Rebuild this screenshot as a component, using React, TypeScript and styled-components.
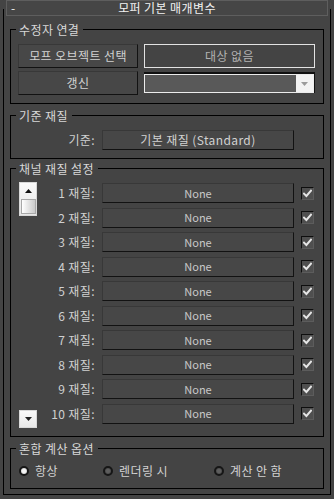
import React from "react";
import styled, { createGlobalStyle } from "styled-components";

const Global = createGlobalStyle`
  html, body { margin: 0; padding: 0; background: #444444; }
  body {
    font-family: "Noto Sans CJK KR", "Noto Sans", sans-serif;
    font-size: 12px;
    letter-spacing: 0.4px;
    color: #d2d2d2;
  }
  * { box-sizing: border-box; }
`;

const Root = styled.div`
  width: 334px;
  height: 499px;
  background: #444444;
  padding: 9px 0 0 3px;
  overflow: hidden;
`;

const Frame = styled.div`
  width: 328px;
  height: 486px;
  border: 1px solid #000;
  border-top: none;
  display: flex;
  flex-direction: column;
`;

const TitleBar = styled.div`
  margin: -9px 2px 0 2px;
  height: 16px;
  flex-shrink: 0;
  border: 1px solid #5e5e5e;
  background: #464646;
  display: grid;
  grid-template-columns: 1fr auto 1fr;
  align-items: center;
  color: #f2f2f2;
  line-height: 14px;
`;

const Collapse = styled.span`
  padding-left: 4px;
`;

const Group = styled.div<{ $top: number; $h: number }>`
  position: relative;
  flex-shrink: 0;
  margin: ${(p) => p.$top}px 6px 0 6px;
  height: ${(p) => p.$h}px;
  border: 1px solid #000;
`;

const GroupLabel = styled.span`
  position: absolute;
  top: -9px;
  left: 5px;
  padding: 0 4px 0 3px;
  background: #444444;
  line-height: 17px;
  color: #d8d8d8;
  white-space: nowrap;
`;

const ConnectGrid = styled.div`
  display: grid;
  grid-template-columns: 120px 171px;
  grid-template-rows: 24px 24px;
  column-gap: 6px;
  row-gap: 3px;
  padding: 14px 0 0 7px;
`;

const Button = styled.div<{ $small?: boolean }>`
  display: flex;
  align-items: center;
  justify-content: center;
  height: 100%;
  background: #474747;
  border: 1px solid;
  border-color: #383838 #121212 #121212 #383838;
  color: ${(p) => (p.$small ? "#c9c9c9" : "#d2d2d2")};
  font-size: ${(p) => (p.$small ? "11px" : "12px")};
  letter-spacing: ${(p) => (p.$small ? "0" : "0.4px")};
  line-height: 1;
  white-space: nowrap;
`;

const TargetButton = styled.div`
  display: flex;
  align-items: center;
  justify-content: center;
  background: #444444;
  border: 1px solid #e2e2e2;
  color: #b2b2b2;
  line-height: 1;
`;

const Combo = styled.div`
  margin: 1px 0 2px 0;
  border-top: 2px solid #111;
  border-right: 1px solid #111;
  display: flex;
`;

const ComboInner = styled.div`
  flex: 1;
  display: grid;
  grid-template-columns: 1fr 17px;
  border: 1px solid #ececec;
`;

const ComboField = styled.div`
  background: #595959;
`;

const ComboArrow = styled.div`
  background: #f2f2f2;
  display: flex;
  align-items: center;
  justify-content: center;
`;

const BaseRow = styled.div`
  display: grid;
  grid-template-columns: 84px 192px;
  column-gap: 7px;
  align-items: center;
  height: 20px;
  margin-top: 14px;
`;

const RowLabel = styled.span`
  text-align: right;
  white-space: nowrap;
  color: #d0d0d0;
  line-height: 1;
`;

const ChannelBody = styled.div`
  display: flex;
  align-items: flex-start;
  padding-left: 8px;
`;

const ScrollCol = styled.div`
  width: 18px;
  height: 246px;
  margin-top: 13px;
  display: flex;
  flex-direction: column;
  justify-content: space-between;
`;

const ScrollUp = styled.div`
  width: 18px;
  height: 34px;
  background: linear-gradient(#fafafa, #e6e6e6);
  border: 1px solid #d8d8d8;
  display: flex;
  flex-direction: column;
  align-items: center;
`;

const ArrowSlot = styled.div`
  height: 16px;
  display: flex;
  align-items: center;
  justify-content: center;
`;

const Thumb = styled.div`
  width: 15px;
  height: 15px;
  background: linear-gradient(90deg, #ffffff, #c9c9c9);
  border: 1px solid #a8a8a8;
`;

const ScrollDown = styled.div`
  width: 18px;
  height: 18px;
  background: linear-gradient(#fafafa, #e8e8e8);
  border: 1px solid #d8d8d8;
  display: flex;
  align-items: center;
  justify-content: center;
`;

const Rows = styled.div`
  margin-top: 14px;
  display: flex;
  flex-direction: column;
  gap: 4.5px;
`;

const ChannelRow = styled.div`
  display: grid;
  grid-template-columns: 58px 192px 13px;
  column-gap: 7px;
  align-items: center;
  height: 20px;
`;

const Check = styled.div`
  width: 13px;
  height: 13px;
  background: #4f4f4f;
  border: 1px solid;
  border-color: #0e0e0e #5c5c5c #5c5c5c #0e0e0e;
  display: flex;
  align-items: center;
  justify-content: center;
`;

const RadioRow = styled.div`
  display: grid;
  grid-template-columns: 84px 111px 1fr;
  padding: 16px 0 0 8px;
`;

const RadioItem = styled.div`
  display: flex;
  align-items: center;
  gap: 6px;
  height: 11px;
  color: #d2d2d2;
  white-space: nowrap;
  line-height: 1;
`;

const RadioDot = styled.span<{ $on?: boolean }>`
  width: 10px;
  height: 10px;
  border-radius: 50%;
  flex-shrink: 0;
  border: 2px solid #161616;
  background: ${(p) => (p.$on ? "radial-gradient(circle, #f4f4f4 35%, #bdbdbd 100%)" : "radial-gradient(circle, #5e5e5e 35%, #3c3c3c 100%)")};
`;

const UpArrow = () => (
  <svg width="7" height="4" viewBox="0 0 7 4">
    <polygon points="0,4 7,4 3.5,0" fill="#111" />
  </svg>
);

const DownArrow = ({ color = "#222" }: { color?: string }) => (
  <svg width="7" height="4" viewBox="0 0 7 4">
    <polygon points="0,0 7,0 3.5,4" fill={color} />
  </svg>
);

const CheckMark = () => (
  <svg width="9" height="9" viewBox="0 0 9 9">
    <path d="M1 4.6 L3.4 7 L8 1.6" fill="none" stroke="#e6e6e6" strokeWidth="2" strokeLinecap="square" />
  </svg>
);

const channels = [1, 2, 3, 4, 5, 6, 7, 8, 9, 10];

export default function App() {
  return (
    <>
      <Global />
      <Root>
        <Frame>
          <TitleBar>
            <Collapse>-</Collapse>
            <span>모퍼 기본 매개변수</span>
            <span />
          </TitleBar>

          <Group $top={13} $h={75}>
            <GroupLabel>수정자 연결</GroupLabel>
            <ConnectGrid>
              <Button>모프 오브젝트 선택</Button>
              <TargetButton>대상 없음</TargetButton>
              <Button>갱신</Button>
              <Combo>
                <ComboInner>
                  <ComboField />
                  <ComboArrow>
                    <DownArrow color="#9a9a9a" />
                  </ComboArrow>
                </ComboInner>
              </Combo>
            </ConnectGrid>
          </Group>

          <Group $top={11} $h={44}>
            <GroupLabel>기준 재질</GroupLabel>
            <BaseRow>
              <RowLabel>기준:</RowLabel>
              <Button>기본 재질 (Standard)</Button>
            </BaseRow>
          </Group>

          <Group $top={9} $h={269}>
            <GroupLabel>채널 재질 설정</GroupLabel>
            <ChannelBody>
              <ScrollCol>
                <ScrollUp>
                  <ArrowSlot>
                    <UpArrow />
                  </ArrowSlot>
                  <Thumb />
                </ScrollUp>
                <ScrollDown>
                  <DownArrow />
                </ScrollDown>
              </ScrollCol>
              <Rows>
                {channels.map((n) => (
                  <ChannelRow key={n}>
                    <RowLabel>{n} 재질:</RowLabel>
                    <Button $small>None</Button>
                    <Check>
                      <CheckMark />
                    </Check>
                  </ChannelRow>
                ))}
              </Rows>
            </ChannelBody>
          </Group>

          <Group $top={11} $h={41}>
            <GroupLabel>혼합 계산 옵션</GroupLabel>
            <RadioRow>
              <RadioItem>
                <RadioDot $on />
                항상
              </RadioItem>
              <RadioItem>
                <RadioDot />
                렌더링 시
              </RadioItem>
              <RadioItem>
                <RadioDot />
                계산 안 함
              </RadioItem>
            </RadioRow>
          </Group>
        </Frame>
      </Root>
    </>
  );
}
